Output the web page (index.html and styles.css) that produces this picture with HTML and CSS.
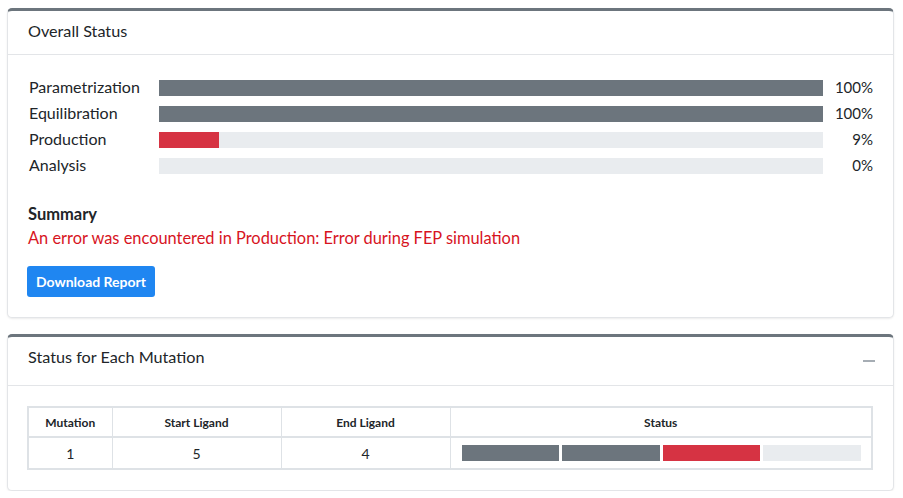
FILE: index.html
```html
<!DOCTYPE html>
<html>
<head>
<meta charset="utf-8">
<link rel="stylesheet" href="styles.css">
</head>
<body>
<div class="page">
  <section class="card">
    <div class="card-header">
      <h2 class="card-title">Overall Status</h2>
    </div>
    <div class="card-body">
      <div class="progress-list">
        <div class="p-row">
          <span class="p-label">Parametrization</span>
          <div class="bar"><div class="fill fill-gray" style="width:100%"></div></div>
          <span class="p-value">100%</span>
        </div>
        <div class="p-row">
          <span class="p-label">Equilibration</span>
          <div class="bar"><div class="fill fill-gray" style="width:100%"></div></div>
          <span class="p-value">100%</span>
        </div>
        <div class="p-row">
          <span class="p-label">Production</span>
          <div class="bar"><div class="fill fill-red" style="width:9%"></div></div>
          <span class="p-value">9%</span>
        </div>
        <div class="p-row">
          <span class="p-label">Analysis</span>
          <div class="bar"><div class="fill fill-gray" style="width:0%"></div></div>
          <span class="p-value">0%</span>
        </div>
      </div>
      <div class="summary">
        <h3 class="summary-title">Summary</h3>
        <p class="summary-error">An error was encountered in Production: Error during FEP simulation</p>
      </div>
      <button class="btn-primary">Download Report</button>
    </div>
  </section>

  <section class="card">
    <div class="card-header header-tall">
      <h2 class="card-title">Status for Each Mutation</h2>
      <span class="collapse-icon"></span>
    </div>
    <div class="card-body">
      <table class="mut-table">
        <thead>
          <tr>
            <th class="col-mut">Mutation</th>
            <th class="col-start">Start Ligand</th>
            <th class="col-end">End Ligand</th>
            <th>Status</th>
          </tr>
        </thead>
        <tbody>
          <tr>
            <td>1</td>
            <td>5</td>
            <td>4</td>
            <td class="status-cell">
              <div class="seg-bar">
                <span class="seg seg-gray"></span>
                <span class="seg seg-gray"></span>
                <span class="seg seg-red"></span>
                <span class="seg seg-light"></span>
              </div>
            </td>
          </tr>
        </tbody>
      </table>
    </div>
  </section>
</div>
</body>
</html>
```
FILE: styles.css
```css
* { box-sizing: border-box; }
html, body { margin: 0; padding: 0; background: #fff; }
body {
  font-family: "Lato", "Noto Sans", sans-serif;
  color: #212529;
}
.page {
  padding: 8px 9px 0 7px;
  display: flex;
  flex-direction: column;
  gap: 16px;
}
.card {
  border: 1px solid #e3e5e8;
  border-top: 3px solid #6c757d;
  border-radius: 5px;
  background: #fff;
  box-shadow: 0 1px 2px rgba(0,0,0,0.08);
}
.card-header {
  padding: 10px 20px 13px 20px;
  border-bottom: 1px solid #e3e5e8;
  display: flex;
  justify-content: space-between;
  align-items: flex-start;
}
.header-tall { padding-bottom: 18px; }
.card-title {
  margin: 0;
  font-size: 16.2px;
  line-height: 20px;
  font-weight: 400;
  color: #212529;
}
.collapse-icon {
  width: 12px;
  height: 2px;
  background: #a6adb4;
  margin-top: 13px;
  margin-right: -2px;
}
.card-body { padding: 20px; }
.progress-list { display: flex; flex-direction: column; margin-left: 1px; }
.p-row {
  display: flex;
  align-items: center;
  height: 26px;
}
.p-label {
  width: 130px;
  font-size: 16px;
  line-height: 20px;
  padding-bottom: 3px;
  flex: none;
}
.bar {
  flex: 1;
  height: 16px;
  background: #e9ecef;
}
.fill { height: 100%; }
.fill-gray { background: #6c757d; }
.fill-red { background: #d63343; }
.p-value {
  width: 50px;
  text-align: right;
  font-size: 15px;
  line-height: 20px;
  padding-bottom: 2px;
  flex: none;
}
.summary { margin-top: 24px; }
.summary-title {
  margin: 0;
  font-size: 16.5px;
  font-weight: 700;
  line-height: 22px;
}
.summary-error {
  margin: 2px 0 0 0;
  font-size: 16.4px;
  line-height: 22px;
  color: #d7141e;
}
.btn-primary {
  margin-top: 17px;
  margin-left: -1px;
  height: 31px;
  padding: 0 9px;
  border: none;
  border-radius: 3px;
  background: #1f86f1;
  color: #fff;
  font-family: inherit;
  font-size: 14px;
  font-weight: 700;
  display: block;
}
.mut-table {
  width: calc(100% + 1px);
  margin-left: -1px;
  border-collapse: collapse;
  border: 2px solid #dee2e6;
  text-align: center;
}
.mut-table th, .mut-table td {
  border: 1px solid #dee2e6;
  padding: 0 10px;
}
.mut-table th {
  height: 30px;
  font-size: 12px;
  font-weight: 700;
  border-bottom-width: 2px;
}
.mut-table td {
  height: 32px;
  font-size: 14px;
}
.col-mut { width: 84px; }
.col-start { width: 169px; }
.col-end { width: 169px; }
.mut-table .status-cell { padding: 0 10px 0 11px; }
.seg-bar {
  display: flex;
  gap: 3px;
  height: 16px;
}
.seg { flex: 1; }
.seg-gray { background: #6c757d; }
.seg-red { background: #d63343; }
.seg-light { background: #e9ecef; }
```
